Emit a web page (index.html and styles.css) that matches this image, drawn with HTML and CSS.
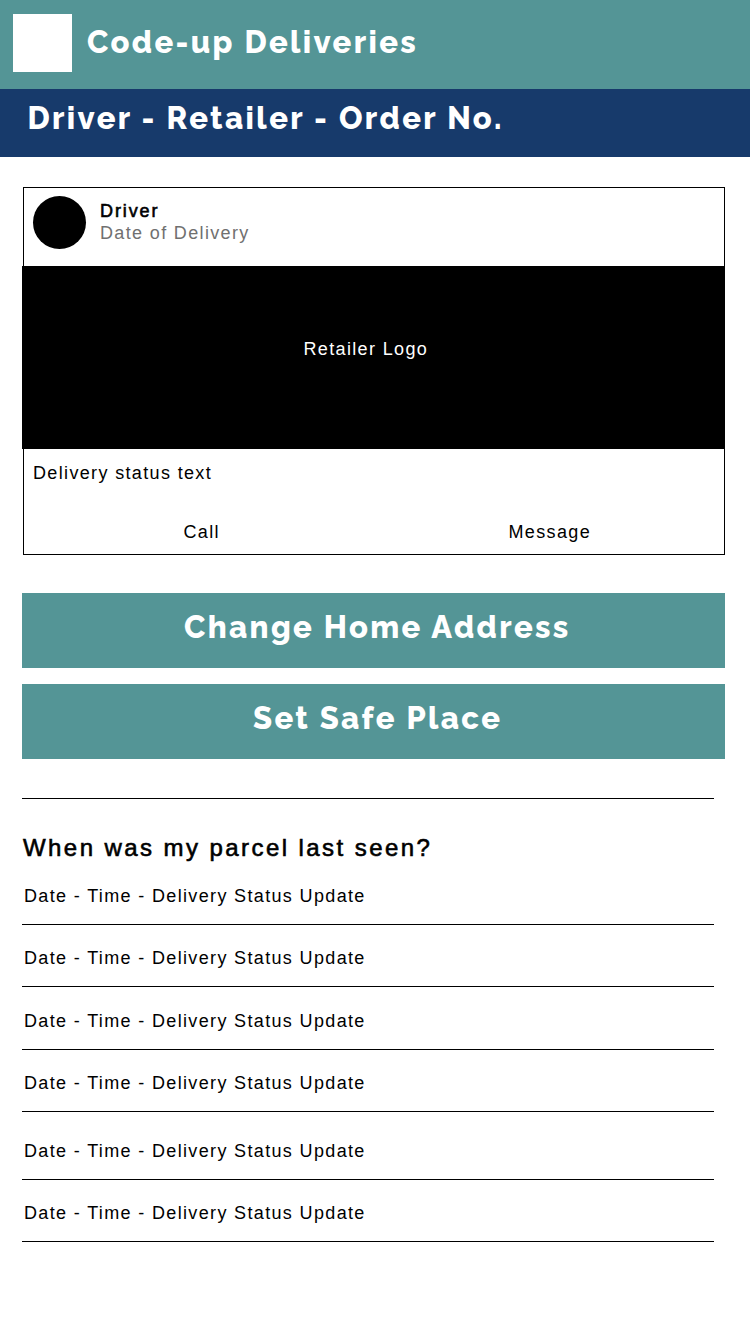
FILE: index.html
```html
<!DOCTYPE html>
<html lang="en">
<head>
<meta charset="utf-8">
<title>Code-up Deliveries</title>
<link rel="stylesheet" href="styles.css">
</head>
<body>
<header class="brand">
  <div class="logo"></div>
  <h1 class="title brand-name">Code-up Deliveries</h1>
</header>
<div class="subheader"><h2 class="title order-title">Driver - Retailer - Order No.</h2></div>
<main>
  <section class="card">
    <div class="driver">
      <div class="avatar"></div>
      <div class="driver-info">
        <div class="driver-name">Driver</div>
        <div class="driver-date">Date of Delivery</div>
      </div>
    </div>
    <div class="retailer"><span>Retailer Logo</span></div>
    <div class="status">Delivery status text</div>
    <div class="actions"><span class="action call">Call</span><span class="action message">Message</span></div>
  </section>
  <button class="title button change">Change Home Address</button>
  <button class="title button safe">Set Safe Place</button>
  <section class="history">
    <h3 class="history-title">When was my parcel last seen?</h3>
    <ul class="updates">
      <li class="update">Date - Time - Delivery Status Update</li>
      <li class="update">Date - Time - Delivery Status Update</li>
      <li class="update tall">Date - Time - Delivery Status Update</li>
      <li class="update">Date - Time - Delivery Status Update</li>
      <li class="update taller">Date - Time - Delivery Status Update</li>
      <li class="update">Date - Time - Delivery Status Update</li>
    </ul>
  </section>
</main>
</body>
</html>
```
FILE: styles.css
```css
* { box-sizing: border-box; }
body {
  margin: 0;
  min-height: 1334px;
  background: #fff;
  color: #000;
  font: 18px/20px "Liberation Sans", Arial, sans-serif;
  letter-spacing: 1.35px;
  white-space: nowrap;
}
h1, h2, h3, ul { margin: 0; padding: 0; }
.title {
  color: #fff;
  font: 800 31px/38px Raleway, Inter, sans-serif;
  letter-spacing: 2.36px;
}
.brand {
  display: flex;
  height: 89px;
  padding: 14px 0 0 13px;
  background: #549596;
}
.logo { width: 59px; height: 58px; background: #fff; }
.brand-name { padding: 9px 0 0 15px; }
.subheader { height: 68px; padding: 10px 0 0 27.5px; background: #173a6b; }
.order-title { letter-spacing: 2.41px; }
main { padding: 30px 25px 0 22px; }
.card { height: 368px; margin-left: 1px; border: 1px solid #000; }
.driver { display: flex; height: 78px; padding: 8px 0 0 9px; }
.avatar { width: 53px; height: 53px; border-radius: 50%; background: #000; }
.driver-info { padding: 4px 0 0 14px; line-height: 22px; }
.driver-name { letter-spacing: 1.9px; -webkit-text-stroke: .6px #000; }
.driver-date { color: #707070; }
.retailer {
  height: 183px;
  margin: 0 -1px 0 -2px;
  padding: 73px 0 0 281.5px;
  background: #000;
  color: #fff;
}
.status { padding: 14px 0 0 9px; }
.actions { display: grid; grid-template-columns: 325px 1fr; padding: 39px 0 0 159.5px; }
.button {
  display: block;
  width: 703px;
  height: 75px;
  border: 0;
  background: #549596;
  text-align: left;
}
.change { margin-top: 38px; padding: 0 0 7px 162px; }
.safe { margin-top: 16px; padding: 0 0 7px 231px; }
.history { width: 692px; margin-top: 39px; border-top: 1px solid #000; }
.history-title {
  padding: 35px 0 0 1px;
  font-size: 24px;
  line-height: 28px;
  font-weight: 400;
  letter-spacing: 2.43px;
  -webkit-text-stroke: .6px #000;
}
.updates { list-style: none; }
.update {
  display: flex;
  align-items: flex-end;
  height: 62px;
  padding: 0 0 18px 2px;
  border-bottom: 1px solid #000;
}
.update:first-child { height: 63px; }
.update.tall { height: 63px; }
.update.taller { height: 68px; }
```
